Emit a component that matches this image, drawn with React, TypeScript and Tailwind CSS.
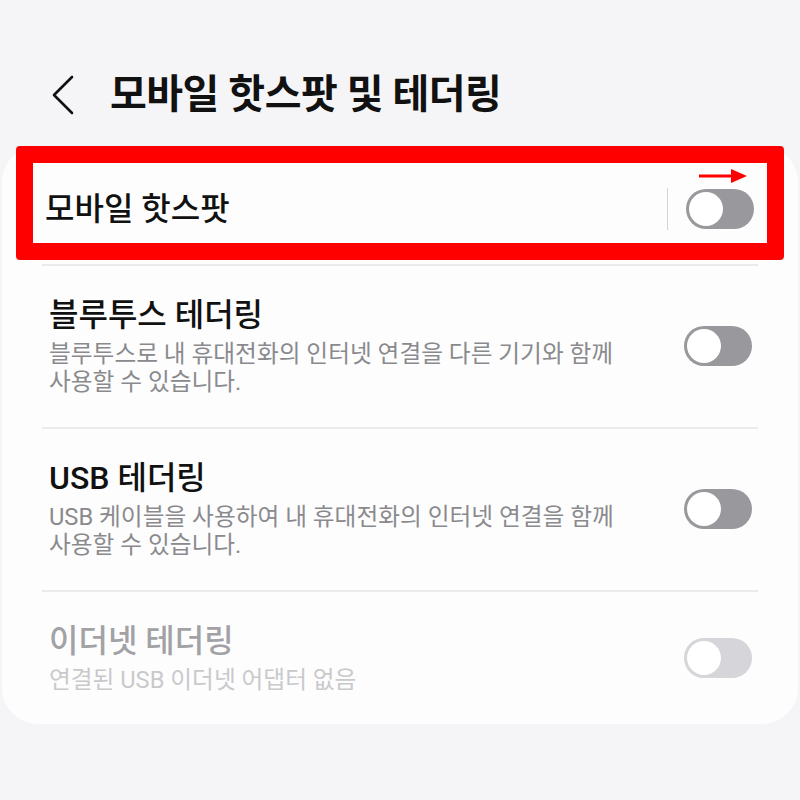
const font = { fontFamily: 'Roboto, "Noto Sans CJK KR", sans-serif' };

function Toggle({ disabled = false }: { disabled?: boolean }) {
  return (
    <div
      className={`flex h-[40px] w-[68px] shrink-0 items-center rounded-full px-[3px] ${
        disabled ? 'bg-[#d6d6da]' : 'bg-[#99999d]'
      }`}
    >
      <div className="h-[34px] w-[34px] rounded-full bg-white" />
    </div>
  );
}

function Row({
  title,
  sub,
  disabled = false,
}: {
  title: string;
  sub: string;
  disabled?: boolean;
}) {
  return (
    <div className="flex items-center pl-[47px] pr-[46px]">
      <div className="flex-1">
        <div
          className={`text-[32px] font-medium leading-[38px] ${
            disabled ? 'text-[#a2a2a6]' : 'text-[#111]'
          }`}
        >
          {title}
        </div>
        <div
          className={`mt-[6px] w-[590px] break-keep text-[23.7px] leading-[28px] ${
            disabled ? 'text-[#c9c9cc]' : 'text-[#8a8a8e]'
          }`}
        >
          {sub}
        </div>
      </div>
      <Toggle disabled={disabled} />
    </div>
  );
}

export default function App() {
  return (
    <div className="h-[800px] w-[800px] overflow-hidden bg-[#f5f5f7]" style={font}>
      {/* Header */}
      <div className="flex h-[146px] items-center pl-[52px] pt-[44px]">
        <svg width="22" height="40" viewBox="0 0 22 40" fill="none">
          <path d="M20 2 L2 20 L20 38" stroke="#111" strokeWidth="2.6" strokeLinecap="round" strokeLinejoin="round" />
        </svg>
        <h1 className="ml-[36px] text-[40px] font-bold tracking-[-0.5px] text-[#111]">
          모바일 핫스팟 및 테더링
        </h1>
      </div>

      {/* Card */}
      <div className="mx-[2px] rounded-[36px] bg-[#fdfdfd] pb-[30px]">
        <div className="mx-[14px] h-[114px] rounded-[4px] border-[17px] border-[#ff0000]">
          <div className="relative flex h-full items-center pl-[12px] pr-[13px] pt-[12px]">
            <span className="flex-1 text-[32px] font-medium text-[#111]">모바일 핫스팟</span>
            <div className="mr-[18px] h-[42px] w-px bg-[#d4d4d6]" />
            <Toggle />
            <svg
              className="absolute right-[18px] top-[6px]"
              width="52"
              height="14"
              viewBox="0 0 52 14"
            >
              <line x1="2" y1="7" x2="40" y2="7" stroke="#ff0000" strokeWidth="3" />
              <path d="M34 0 L50 7 L34 14 Z" fill="#ff0000" />
            </svg>
          </div>
        </div>

        <div className="mx-[40px] mt-[4px] h-[2px] bg-[#ebebed]" />
        <div className="pb-[31px] pt-[30px]">
          <Row
            title="블루투스 테더링"
            sub="블루투스로 내 휴대전화의 인터넷 연결을 다른 기기와 함께 사용할 수 있습니다."
          />
        </div>
        <div className="mx-[40px] h-[2px] bg-[#ebebed]" />
        <div className="pb-[31px] pt-[30px]">
          <Row
            title="USB 테더링"
            sub="USB 케이블을 사용하여 내 휴대전화의 인터넷 연결을 함께 사용할 수 있습니다."
          />
        </div>
        <div className="mx-[40px] h-[2px] bg-[#ebebed]" />
        <div className="pt-[30px]">
          <Row title="이더넷 테더링" sub="연결된 USB 이더넷 어댑터 없음" disabled />
        </div>
      </div>
    </div>
  );
}
